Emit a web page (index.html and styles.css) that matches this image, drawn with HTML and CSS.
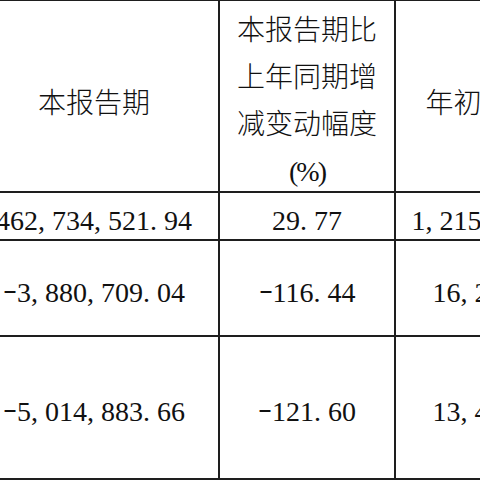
FILE: index.html
```html
<!DOCTYPE html>
<html lang="zh-CN">
<head>
<meta charset="utf-8">
<title>主要会计数据</title>
<link rel="stylesheet" href="styles.css">
</head>
<body>
<div class="sheet">
  <div class="cell head zh">本报告期</div>
  <div class="cell head zh"><div class="lines">本报告期比<br>上年同期增<br>减变动幅度<br><span class="pct">(%)</span></div></div>
  <div class="cell head zh">年初至报告期末</div>

  <div class="cell num">462<span class="p">,</span>734<span class="p">,</span>521<span class="p">.</span>94</div>
  <div class="cell num">29<span class="p">.</span>77</div>
  <div class="cell num">1<span class="p">,</span>215<span class="p">,</span>836<span class="p">,</span>204<span class="p">.</span>17</div>

  <div class="cell num"><span class="m">-</span>3<span class="p">,</span>880<span class="p">,</span>709<span class="p">.</span>04</div>
  <div class="cell num"><span class="m">-</span>116<span class="p">.</span>44</div>
  <div class="cell num">16<span class="p">,</span>253<span class="p">,</span>418<span class="p">.</span>62</div>

  <div class="cell num"><span class="m">-</span>5<span class="p">,</span>014<span class="p">,</span>883<span class="p">.</span>66</div>
  <div class="cell num"><span class="m">-</span>121<span class="p">.</span>60</div>
  <div class="cell num">13<span class="p">,</span>472<span class="p">,</span>095<span class="p">.</span>31</div>
</div>
</body>
</html>
```

FILE: styles.css
```css
html, body {
  margin: 0;
  padding: 0;
  width: 480px;
  height: 480px;
  overflow: hidden;
  background: #fff;
}

.sheet {
  display: grid;
  grid-template-columns: 248px 174px 255px;
  grid-template-rows: 190px 46px 94px 141px;
  gap: 2px;
  padding: 2px 0;
  margin: -1px 0 0 -30px;
  width: max-content;
  background: #1e1e1e;
}

.cell {
  background: #fff;
  color: #111;
  display: flex;
  align-items: center;
  justify-content: center;
  text-align: center;
  font-size: 28px;
  padding-top: 9px;
  box-sizing: border-box;
  white-space: nowrap;
}

.zh {
  font-family: "Noto Sans CJK SC", sans-serif;
  font-weight: 300;
}

.lines {
  line-height: 47px;
  margin-top: -2px;
}

.pct {
  font-family: "Liberation Serif", serif;
  font-weight: 400;
  letter-spacing: -2px;
}

.num {
  font-family: "Liberation Serif", serif;
  line-height: 32px;
}

.p {
  display: inline-block;
  width: 0.5em;
  text-align: left;
}

.m {
  display: inline-block;
  width: 0.5em;
  text-align: center;
  transform: translateY(-4px) scaleX(1.5);
}
```
